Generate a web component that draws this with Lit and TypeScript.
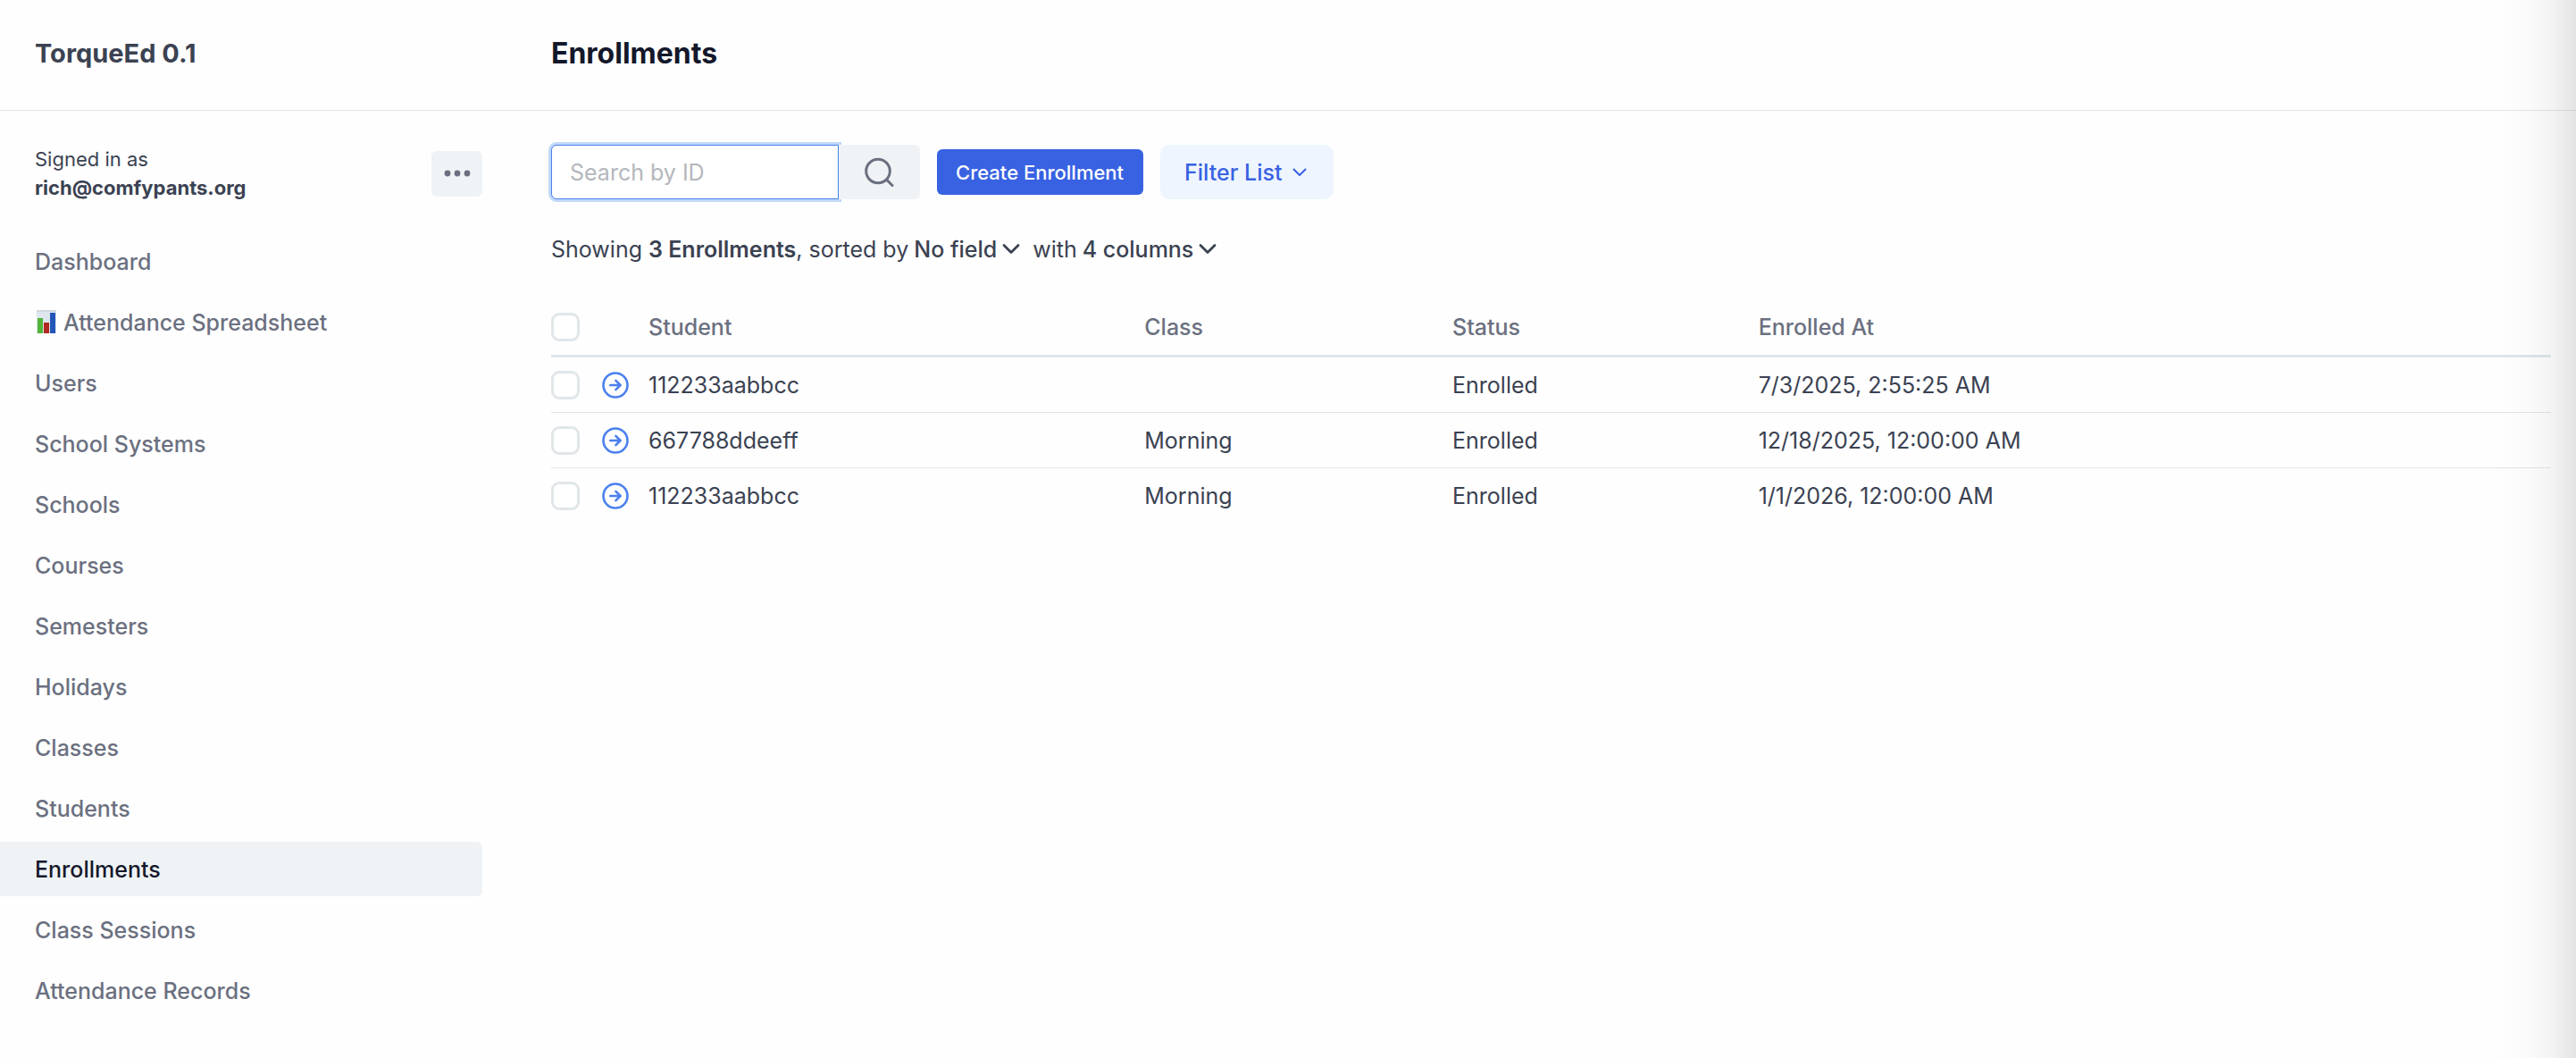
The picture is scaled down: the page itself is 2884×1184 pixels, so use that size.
import { LitElement, html, css, nothing } from "lit";
import { customElement, property, state } from "lit/decorators.js";
import { classMap } from "lit/directives/class-map.js";

interface Enrollment {
  id: string;
  student: string;
  className: string;
  status: string;
  enrolledAt: string;
}

const NAV_ITEMS = [
  "Dashboard",
  "Attendance Spreadsheet",
  "Users",
  "School Systems",
  "Schools",
  "Courses",
  "Semesters",
  "Holidays",
  "Classes",
  "Students",
  "Enrollments",
  "Class Sessions",
  "Attendance Records",
];

const ENROLLMENTS: Enrollment[] = [
  { id: "1", student: "112233aabbcc", className: "", status: "Enrolled", enrolledAt: "7/3/2025, 2:55:25 AM" },
  { id: "2", student: "667788ddeeff", className: "Morning", status: "Enrolled", enrolledAt: "12/18/2025, 12:00:00 AM" },
  { id: "3", student: "112233aabbcc", className: "Morning", status: "Enrolled", enrolledAt: "1/1/2026, 12:00:00 AM" },
];

const reset = css`
  *,
  *::before,
  *::after {
    box-sizing: border-box;
  }
  button,
  input {
    font: inherit;
    color: inherit;
    margin: 0;
    border: 0;
    padding: 0;
    background: none;
  }
  button {
    cursor: pointer;
  }
  a {
    color: inherit;
    text-decoration: none;
  }
  svg {
    display: block;
    flex: none;
  }
`;

@customElement("app-sidebar")
export class AppSidebar extends LitElement {
  @property() active = "";

  static styles = [
    reset,
    css`
      :host {
        display: block;
        padding-top: 38px;
      }
      .account {
        display: flex;
        align-items: center;
        justify-content: space-between;
        padding-left: 39px;
        font-size: 22px;
        line-height: 32px;
        color: #3b4252;
      }
      .email {
        display: block;
        font-weight: 700;
      }
      .menu {
        display: grid;
        place-items: center;
        width: 57px;
        height: 51px;
        border-radius: 6px;
        background: #eff3f6;
        color: #6b7080;
      }
      .nav {
        display: flex;
        flex-direction: column;
        gap: 7px;
        margin-top: 36px;
      }
      .item {
        display: flex;
        align-items: center;
        gap: 7px;
        height: 61px;
        padding-left: 39px;
        border-radius: 0 6px 6px 0;
        font-size: 25px;
        font-weight: 500;
        color: #6b7080;
      }
      .item.active {
        background: #eff3f6;
        color: #14182b;
      }
    `,
  ];

  private chartIcon() {
    return html`<svg width="25" height="32" viewBox="0 0 25 32" aria-hidden="true">
      <rect x="2" y="2" width="22" height="26" fill="#dde6ed" />
      <rect x="2" y="2" width="22" height="2" fill="#cfd7dd" />
      <rect x="3" y="11" width="6" height="17" fill="#52b43a" />
      <rect x="10" y="16" width="6" height="12" fill="#b0281f" />
      <rect x="17" y="5" width="6" height="23" fill="#2456b8" />
    </svg>`;
  }

  render() {
    return html`
      <div class="account">
        <div>Signed in as <strong class="email">rich@comfypants.org</strong></div>
        <button class="menu" type="button" aria-label="Account menu">
          <svg width="32" height="10" viewBox="0 0 32 10" fill="currentColor" aria-hidden="true">
            <circle cx="5" cy="5" r="3.4" />
            <circle cx="16" cy="5" r="3.4" />
            <circle cx="27" cy="5" r="3.4" />
          </svg>
        </button>
      </div>
      <nav class="nav" aria-label="Main">
        ${NAV_ITEMS.map(
          (name) => html`<a
            href="#"
            class=${classMap({ item: true, active: name === this.active })}
            aria-current=${name === this.active ? "page" : nothing}
            >${name === "Attendance Spreadsheet" ? this.chartIcon() : nothing}<span>${name}</span></a
          >`,
        )}
      </nav>
    `;
  }
}

@customElement("enrollment-toolbar")
export class EnrollmentToolbar extends LitElement {
  static styles = [
    reset,
    css`
      .tools {
        display: flex;
        align-items: center;
        gap: 19px;
      }
      .search {
        display: flex;
        height: 61px;
      }
      .field {
        width: 322px;
        padding: 0 20px;
        border: 1px solid #4b80ee;
        border-radius: 6px 0 0 6px;
        outline: none;
        box-shadow: 0 0 0 3px #c1d8f8;
        background: #fff;
        font-size: 25px;
        color: #3b4252;
      }
      .field::placeholder {
        color: #b4b7bc;
        opacity: 1;
      }
      .go {
        position: relative;
        display: grid;
        place-items: center;
        width: 91px;
        border-radius: 0 6px 6px 0;
        background: #eff3f6;
        color: #6b7080;
      }
      .create {
        height: 51px;
        padding: 0 22px 0 21px;
        border-radius: 6px;
        background: #3862e2;
        color: #fff;
        font-size: 22px;
        font-weight: 500;
      }
      .filter {
        display: flex;
        align-items: center;
        gap: 12px;
        height: 61px;
        padding: 0 30px 0 27px;
        border-radius: 10px;
        background: #eef5fe;
        color: #3862e2;
        font-size: 25px;
        font-weight: 500;
      }
      .summary {
        display: flex;
        align-items: center;
        gap: 6px;
        margin: 38px 0 0;
        font-size: 25px;
        line-height: 36px;
        color: #3b4252;
      }
      .count {
        font-weight: 600;
      }
      .pick {
        display: flex;
        align-items: center;
        gap: 6px;
        margin-right: 8px;
        font-weight: 500;
      }
    `,
  ];

  private chevron() {
    return html`<svg width="20" height="14" viewBox="0 0 20 14" fill="none" stroke="currentColor"
      stroke-width="2.8" stroke-linecap="round" stroke-linejoin="round" aria-hidden="true">
      <path d="M2 2.5 10 10.5 18 2.5" />
    </svg>`;
  }

  render() {
    return html`
      <div class="tools">
        <form class="search" role="search" @submit=${(e: Event) => e.preventDefault()}>
          <input class="field" type="text" placeholder="Search by ID" aria-label="Search by ID" />
          <button class="go" type="submit" aria-label="Search">
            <svg width="36" height="36" viewBox="0 0 36 36" fill="none" stroke="currentColor"
              stroke-width="3" stroke-linecap="round" aria-hidden="true">
              <circle cx="16" cy="16.5" r="13.3" />
              <path d="M26 26.5 32 32.5" />
            </svg>
          </button>
        </form>
        <button class="create" type="button">Create Enrollment</button>
        <button class="filter" type="button">
          Filter List
          <svg width="16" height="10" viewBox="0 0 16 10" fill="none" stroke="currentColor"
            stroke-width="2" stroke-linecap="round" stroke-linejoin="round" aria-hidden="true">
            <path d="M1.5 1.5 8 8 14.5 1.5" />
          </svg>
        </button>
      </div>
      <div class="summary">
        <span>Showing <span class="count">3 Enrollments</span>, sorted by</span>
        <button class="pick" type="button">No field ${this.chevron()}</button>
        <span>with</span>
        <button class="pick" type="button">4 columns ${this.chevron()}</button>
      </div>
    `;
  }
}

@customElement("enrollment-table")
export class EnrollmentTable extends LitElement {
  @property({ attribute: false }) rows: Enrollment[] = [];
  @state() private selected = new Set<string>();

  static styles = [
    reset,
    css`
      .table {
        width: 100%;
        table-layout: fixed;
        border-collapse: separate;
        border-spacing: 0;
        text-align: left;
        font-size: 25px;
        line-height: 32px;
        color: #3b4252;
      }
      .c-check {
        width: 56px;
      }
      .c-open {
        width: 53px;
      }
      .c-student {
        width: 24.8%;
      }
      .c-class {
        width: 15.4%;
      }
      .c-status {
        width: 15.3%;
      }
      th {
        height: 66px;
        padding: 0;
        border-bottom: 3px solid #e1e6e9;
        font-weight: 500;
        color: #6b7080;
      }
      td {
        height: 62px;
        padding: 0;
        border-bottom: 1px solid #e2e4e6;
      }
      tr:last-child td {
        border-bottom-color: transparent;
      }
      .check {
        display: block;
        appearance: none;
        width: 32px;
        height: 32px;
        border: 3px solid #e1e6e9;
        border-radius: 9px;
        background: #fff;
      }
      .check:checked {
        background: #3862e2;
      }
      .open {
        display: block;
        width: 32px;
        color: #4b80ee;
      }
    `,
  ];

  private toggle(id: string) {
    const next = new Set(this.selected);
    if (!next.delete(id)) next.add(id);
    this.selected = next;
  }

  private toggleAll() {
    this.selected =
      this.selected.size === this.rows.length ? new Set() : new Set(this.rows.map((r) => r.id));
  }

  render() {
    return html`
      <table class="table">
        <colgroup>
          <col class="c-check" />
          <col class="c-open" />
          <col class="c-student" />
          <col class="c-class" />
          <col class="c-status" />
          <col />
        </colgroup>
        <thead>
          <tr>
            <th>
              <input class="check" type="checkbox" aria-label="Select all"
                .checked=${this.rows.length > 0 && this.selected.size === this.rows.length}
                @change=${this.toggleAll} />
            </th>
            <th></th>
            <th scope="col">Student</th>
            <th scope="col">Class</th>
            <th scope="col">Status</th>
            <th scope="col">Enrolled At</th>
          </tr>
        </thead>
        <tbody>
          ${this.rows.map(
            (r) => html`<tr>
              <td>
                <input class="check" type="checkbox" aria-label="Select row"
                  .checked=${this.selected.has(r.id)}
                  @change=${() => this.toggle(r.id)} />
              </td>
              <td>
                <a class="open" href="#" aria-label="Open enrollment">
                  <svg width="32" height="32" viewBox="0 0 32 32" fill="none" stroke="currentColor"
                    stroke-width="2.6" stroke-linecap="round" stroke-linejoin="round" aria-hidden="true">
                    <circle cx="16" cy="16" r="13.5" />
                    <path d="M10.3 16H21.5M16.4 10.8 21.6 16 16.4 21.2" />
                  </svg>
                </a>
              </td>
              <td>${r.student}</td>
              <td>${r.className}</td>
              <td>${r.status}</td>
              <td>${r.enrolledAt}</td>
            </tr>`,
          )}
        </tbody>
      </table>
    `;
  }
}

@customElement("app-root")
export class AppRoot extends LitElement {
  static styles = [
    reset,
    css`
      :host {
        display: block;
        font-family: Inter, "Liberation Sans", sans-serif;
      }
      .page {
        position: relative;
        min-height: 100vh;
        background: #fefefe;
      }
      .header,
      .body {
        display: grid;
        grid-template-columns: 540px minmax(0, 1fr);
        column-gap: 77px;
      }
      .header {
        align-items: center;
        height: 124px;
        padding-bottom: 4px;
        border-bottom: 1px solid #e2e4e6;
      }
      .brand,
      .title {
        margin: 0;
        line-height: 40px;
      }
      .brand {
        padding-left: 39px;
        font-size: 29px;
        font-weight: 700;
        color: #3b4252;
      }
      .title {
        font-size: 32px;
        font-weight: 700;
        color: #14182b;
      }
      .main {
        padding: 38px 28px 38px 0;
      }
      .list {
        display: block;
        margin-top: 37px;
      }
      .edge {
        position: absolute;
        inset: 0 0 0 auto;
        width: 90px;
        pointer-events: none;
        background: linear-gradient(
          to right,
          rgba(0, 0, 0, 0),
          rgba(0, 0, 0, 0.01) 35%,
          rgba(0, 0, 0, 0.035) 65%,
          rgba(0, 0, 0, 0.1)
        );
      }
    `,
  ];

  render() {
    return html`
      <div class="page">
        <header class="header">
          <div class="brand">TorqueEd 0.1</div>
          <h1 class="title">Enrollments</h1>
        </header>
        <div class="body">
          <app-sidebar active="Enrollments"></app-sidebar>
          <main class="main">
            <enrollment-toolbar></enrollment-toolbar>
            <enrollment-table class="list" .rows=${ENROLLMENTS}></enrollment-table>
          </main>
        </div>
        <div class="edge"></div>
      </div>
    `;
  }
}
